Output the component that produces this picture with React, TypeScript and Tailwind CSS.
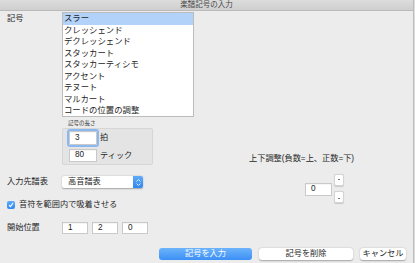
import React from 'react';

const items = [
    'スラー',
    'クレッシェンド',
    'デクレッシェンド',
    'スタッカート',
    'スタッカーティシモ',
    'アクセント',
    'テヌート',
    'マルカート',
    'コードの位置の調整',
];

const Field = ({ value, w = 'w-[26px]', h = 'h-[12px]', focus = false }: { value: string; w?: string; h?: string; focus?: boolean }) => (
    <div
        className={`${w} ${h} bg-white border border-[#c9c9c9] shadow-[inset_0_0.5px_0_rgba(0,0,0,0.08)] pl-[5px] flex items-center text-[8.2px] text-[#222] ${
            focus ? 'outline outline-2 outline-[#8cb8f2] -outline-offset-0 rounded-[1px]' : ''
        }`}
    >
        {value}
    </div>
);

const Step = ({ up }: { up: boolean }) => (
    <div className="w-[10px] h-[12px] bg-white rounded-[2px] border border-[#d4d4d4] shadow-[0_0.5px_1px_rgba(0,0,0,0.15)] flex justify-center">
        <span className={`w-[2px] h-[1px] bg-[#777] ${up ? 'mt-[4px]' : 'mt-[6px]'}`} />
    </div>
);

const App = () => {
    return (
        <div className="w-[415px] h-[263px] bg-[#dcdcdc] font-['Liberation_Sans','Noto_Sans_CJK_JP',sans-serif] text-[#262626]">
            <div className="w-[414px] h-[263px] bg-[#ececec] border-r border-[#bdbdbd] flex flex-col">
                {/* title bar */}
                <div className="h-[11px] shrink-0 bg-gradient-to-b from-[#dcdcdc] to-[#cfcfcf] border-b border-[#bababa] flex items-center justify-center text-[7.5px] leading-[10px] text-[#4a4a4a]">
                    楽譜記号の入力
                </div>

                <div className="flex">
                    {/* left column */}
                    <div className="w-[200px] shrink-0 flex flex-col">
                        <div className="flex items-start">
                            <div className="w-[62px] pl-[7px] pt-[2px] text-[8.2px] leading-[12px]">記号</div>
                            <div className="w-[132px] h-[105px] mt-[1px] bg-white border border-[#bcbcbc] text-[8.4px]">
                                {items.map((it, i) => (
                                    <div
                                        key={it}
                                        className={`h-[11.5px] leading-[10.5px] pl-[1px] ${i === 0 ? 'bg-[#b3d2fa]' : ''}`}
                                    >
                                        {it}
                                    </div>
                                ))}
                            </div>
                        </div>

                        <div className="ml-[68px] mt-[2px] h-[8px] leading-[8px] text-[5.5px] text-[#333]">記号の長さ</div>
                        <div className="ml-[62px] mt-[1px] w-[91px] h-[37px] bg-[#e4e4e4] border border-[#d6d6d6] rounded-[2px] pl-[6px] pt-[2px] flex flex-col">
                            <div className="flex items-center">
                                <Field value="3" w="w-[28px]" h="h-[14px]" focus />
                                <span className="ml-[3px] text-[8.2px] leading-[10px]">拍</span>
                            </div>
                            <div className="flex items-center mt-[4px]">
                                <Field value="80" w="w-[28px]" h="h-[13px]" />
                                <span className="ml-[3px] text-[8.2px] leading-[10px]">ティック</span>
                            </div>
                        </div>

                        <div className="flex items-center mt-[11px] h-[12px]">
                            <div className="w-[62px] pl-[7px] text-[8.2px] leading-[10px]">入力先譜表</div>
                            <div className="w-[81px] h-[12px] bg-white rounded-[2px] shadow-[0_0.5px_1.5px_rgba(0,0,0,0.3)] flex items-center justify-between">
                                <span className="pl-[6px] text-[8.2px] leading-[10px]">高音譜表</span>
                                <div className="w-[10px] h-[12px] rounded-r-[2px] bg-gradient-to-b from-[#5eabf8] to-[#2f87f2] flex flex-col items-center justify-center gap-[1px]">
                                    <svg width="5" height="3" viewBox="0 0 5 3"><path d="M0.5 2.5 L2.5 0.5 L4.5 2.5" stroke="white" strokeWidth="0.8" fill="none" /></svg>
                                    <svg width="5" height="3" viewBox="0 0 5 3"><path d="M0.5 0.5 L2.5 2.5 L4.5 0.5" stroke="white" strokeWidth="0.8" fill="none" /></svg>
                                </div>
                            </div>
                        </div>

                        <div className="flex items-center mt-[13px] h-[8px] pl-[7px]">
                            <div className="w-[8px] h-[8px] rounded-[2px] bg-gradient-to-b from-[#5eabf8] to-[#2f87f2] flex items-center justify-center">
                                <svg width="6" height="6" viewBox="0 0 6 6"><path d="M1 3.2 L2.4 4.6 L5 1.2" stroke="white" strokeWidth="1.1" fill="none" /></svg>
                            </div>
                            <span className="ml-[4px] text-[8.2px] leading-[10px]">音符を範囲内で吸着させる</span>
                        </div>

                        <div className="flex items-center mt-[13px] h-[12px]">
                            <div className="w-[62px] pl-[7px] text-[8.2px] leading-[10px]">開始位置</div>
                            <div className="flex gap-[4px]">
                                <Field value="1" />
                                <Field value="2" />
                                <Field value="0" />
                            </div>
                        </div>
                    </div>

                    {/* right column */}
                    <div className="flex-1 flex flex-col">
                        <div className="ml-[49px] mt-[142px] h-[12px] leading-[12px] text-[8.2px]">上下調整(負数=上、正数=下)</div>
                        <div className="ml-[105px] mt-[9px] flex items-center gap-[2px]">
                            <div className="mt-[1px]">
                                <Field value="0" w="w-[27px]" h="h-[13px]" />
                            </div>
                            <div className="flex flex-col gap-[5px]">
                                <Step up />
                                <Step up={false} />
                            </div>
                        </div>
                    </div>
                </div>

                {/* buttons */}
                <div className="flex justify-end gap-[7px] pr-[7px] mt-[14px]">
                    <div className="w-[93px] h-[12px] rounded-[3px] bg-gradient-to-b from-[#6cb3fb] to-[#3b8ff5] text-white text-[8.2px] leading-[12px] text-center">
                        記号を入力
                    </div>
                    <div className="w-[94px] h-[12px] rounded-[3px] bg-white shadow-[0_0.5px_1.5px_rgba(0,0,0,0.3)] text-[8.2px] leading-[12px] text-center">
                        記号を削除
                    </div>
                    <div className="w-[46px] h-[12px] rounded-[3px] bg-white shadow-[0_0.5px_1.5px_rgba(0,0,0,0.3)] text-[8.2px] leading-[12px] text-center">
                        キャンセル
                    </div>
                </div>
            </div>
        </div>
    );
};

export default App;
